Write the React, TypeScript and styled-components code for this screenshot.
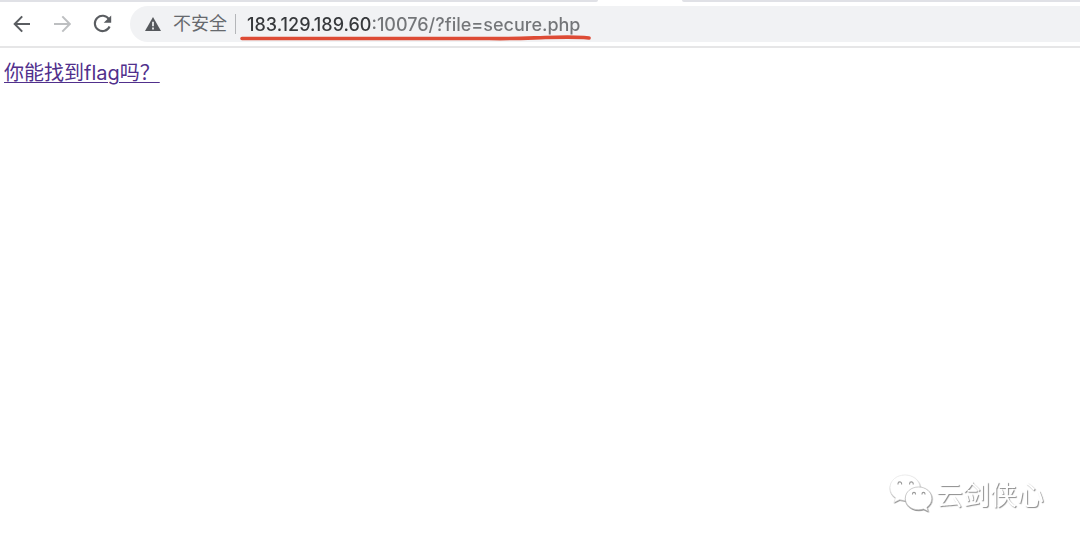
import React from "react";
import styled, { createGlobalStyle } from "styled-components";

const GlobalStyle = createGlobalStyle`
  * { box-sizing: border-box; }
  body {
    margin: 0;
    background: #fff;
    font-family: Inter, "Noto Sans CJK SC", sans-serif;
  }
`;

const Window = styled.div`
  display: flex;
  flex-direction: column;
  min-height: 100vh;
`;

const TabStrip = styled.div`
  display: flex;
  justify-content: space-between;
  gap: 84px;
  height: 2px;
`;

const StripSegment = styled.div<{ $side: "left" | "right" }>`
  flex: ${(p) => (p.$side === "left" ? "3 1 0" : "2 1 0")};
  background: #e0e1e6;
  border-radius: ${(p) => (p.$side === "left" ? "0 0 2px 0" : "0 0 0 2px")};
`;

const Toolbar = styled.header`
  display: flex;
  align-items: center;
  height: 46px;
  padding: 0 0 0 11px;
  border-bottom: 2px solid #e6e6e7;
`;

const NavButtons = styled.nav`
  display: flex;
  gap: 19px;
  margin-right: 18px;
`;

const IconButton = styled.button<{ $muted?: boolean }>`
  display: flex;
  width: 21px;
  height: 22px;
  padding: 0;
  border: 0;
  align-items: center;
  justify-content: center;
  background: none;
  color: ${(p) => (p.$muted ? "#bdbfc1" : "#5a5d61")};
`;

const AddressBar = styled.form`
  display: flex;
  flex: 1;
  align-items: center;
  height: 36px;
  padding-left: 14px;
  border-radius: 18px 0 0 18px;
  background: #f1f2f4;
`;

const SecurityButton = styled.button`
  display: flex;
  align-items: center;
  gap: 11px;
  height: 20px;
  padding: 0 8px 0 0;
  border: 0;
  border-right: 1px solid #b4b6b9;
  background: none;
  color: #66696d;
  font: 400 18px/20px Inter, "Noto Sans CJK SC", sans-serif;
  white-space: nowrap;
`;

const UrlField = styled.div`
  position: relative;
  flex: 1;
  margin-left: 11px;
`;

const UrlInput = styled.input`
  display: block;
  width: 100%;
  height: 36px;
  padding: 0;
  border: 0;
  outline: 0;
  background: linear-gradient(to right, #36383b 125px, #737578 125px);
  background-clip: text;
  -webkit-background-clip: text;
  color: transparent;
  caret-color: #36383b;
  font: 500 18px/24px Inter, sans-serif;
`;

const Marker = styled.svg`
  position: absolute;
  left: -8px;
  bottom: 0;
  pointer-events: none;
`;

const Page = styled.main`
  flex: 1;
  padding: 11px 4px;
`;

const FlagLink = styled.a`
  color: #51308c;
  font-size: 20px;
  line-height: 28px;
  text-decoration-thickness: 1px;
  text-underline-offset: 2px;
`;

const Watermark = styled.footer`
  position: fixed;
  right: 36px;
  bottom: 29px;
  display: flex;
  align-items: center;
  gap: 4px;
  color: #fff;
  font: 400 27px/40px "Noto Sans CJK SC", sans-serif;
  text-shadow: 1px 1px 1px #8c8c8c;
`;

function BackArrow() {
  return (
    <svg width="18" height="18" viewBox="0 0 18 18" fill="none" stroke="currentColor" strokeWidth="2">
      <path d="M17 9H2M9.200 1.400 1.700 9l7.500 7.600" />
    </svg>
  );
}

function ForwardArrow() {
  return (
    <svg width="18" height="18" viewBox="0 0 18 18" fill="none" stroke="currentColor" strokeWidth="2">
      <path d="M1 9H16.500M9.300 1.400 16.800 9l-7.500 7.600" />
    </svg>
  );
}

function Reload() {
  return (
    <svg width="20" height="20" viewBox="0 0 20 20" fill="none">
      <path d="M17 5.200A7.700 7.700 0 1 0 17.600 12.500" stroke="currentColor" strokeWidth="2.100" />
      <path d="M19.200 1.500v7.300h-7.500z" fill="currentColor" />
    </svg>
  );
}

function Warning() {
  return (
    <svg width="18" height="16" viewBox="0 0 18 16">
      <path d="M9 1 17 15H1z" fill="#55585c" />
      <path d="M9 5.700v4.600M9 11.500v2" stroke="#f1f2f4" strokeWidth="1.700" />
    </svg>
  );
}

const LogoSvg = styled.svg`
  overflow: visible;
`;

function ChatLogo() {
  return (
    <LogoSvg width="44" height="40" viewBox="0 0 44 40">
      <defs>
        <filter id="soft" x="-20%" y="-20%" width="140%" height="140%">
          <feDropShadow dx="0.4" dy="0.9" stdDeviation="0.5" floodColor="#666" floodOpacity="0.9" />
        </filter>
      </defs>
      <g fill="#fff" strokeWidth="0.6">
        <path
          filter="url(#soft)"
          stroke="#e4e4e4"
          d="M17 1C8.400 1 2 6.600 2 13.800c0 4.100 2.200 7.600 5.600 10L6 28.300l5.600-2.700c1.800.5 3.600.8 5.800.8 8.300 0 14.600-5.600 14.600-12.600S25.500 1 17 1z"
        />
        <path
          d="M30.500 13c-7.400 0-13.200 5-13.200 11.400s5.800 11.400 13.200 11.400c1.800 0 3.500-.3 5-.8l4.700 2.300-1.300-4c2.900-2.100 4.900-5.200 4.900-8.900C43.800 18 37.900 13 30.500 13z"
          filter="url(#soft)"
          stroke="#b0b0b0"
        />
      </g>
      <g fill="none" stroke="#999" strokeWidth="1.100">
        <path d="M10 10.500v-.8a1.800 1.800 0 0 1 3.600 0v.8M21.600 10.500v-.8a1.800 1.800 0 0 1 3.600 0v.8" />
        <path d="M24.500 20.500v-.6a1.500 1.500 0 0 1 3 0v.6M34 20.500v-.6a1.500 1.500 0 0 1 3 0v.6" />
      </g>
    </LogoSvg>
  );
}

export default function App() {
  return (
    <Window>
      <GlobalStyle />
      <TabStrip>
        <StripSegment $side="left" />
        <StripSegment $side="right" />
      </TabStrip>
      <Toolbar>
        <NavButtons>
          <IconButton aria-label="Back"><BackArrow /></IconButton>
          <IconButton aria-label="Forward" $muted><ForwardArrow /></IconButton>
          <IconButton aria-label="Reload"><Reload /></IconButton>
        </NavButtons>
        <AddressBar onSubmit={(e) => e.preventDefault()}>
          <SecurityButton type="button"><Warning />不安全</SecurityButton>
          <UrlField>
            <UrlInput aria-label="URL" spellCheck={false} defaultValue="183.129.189.60:10076/?file=secure.php" />
            <Marker width="354" height="8" viewBox="0 0 354 8" fill="none">
              <path
                d="M3 4.500H250C275 5 290 4 306 3.500C325 3 335 3 345 3.500L350 4"
                stroke="#dd4b35"
                strokeWidth="3.600"
                strokeLinecap="round"
              />
            </Marker>
          </UrlField>
        </AddressBar>
      </Toolbar>
      <Page>
        <FlagLink href="?file=secure.php">你能找到flag吗？</FlagLink>
      </Page>
      <Watermark><ChatLogo />云剑侠心</Watermark>
    </Window>
  );
}
